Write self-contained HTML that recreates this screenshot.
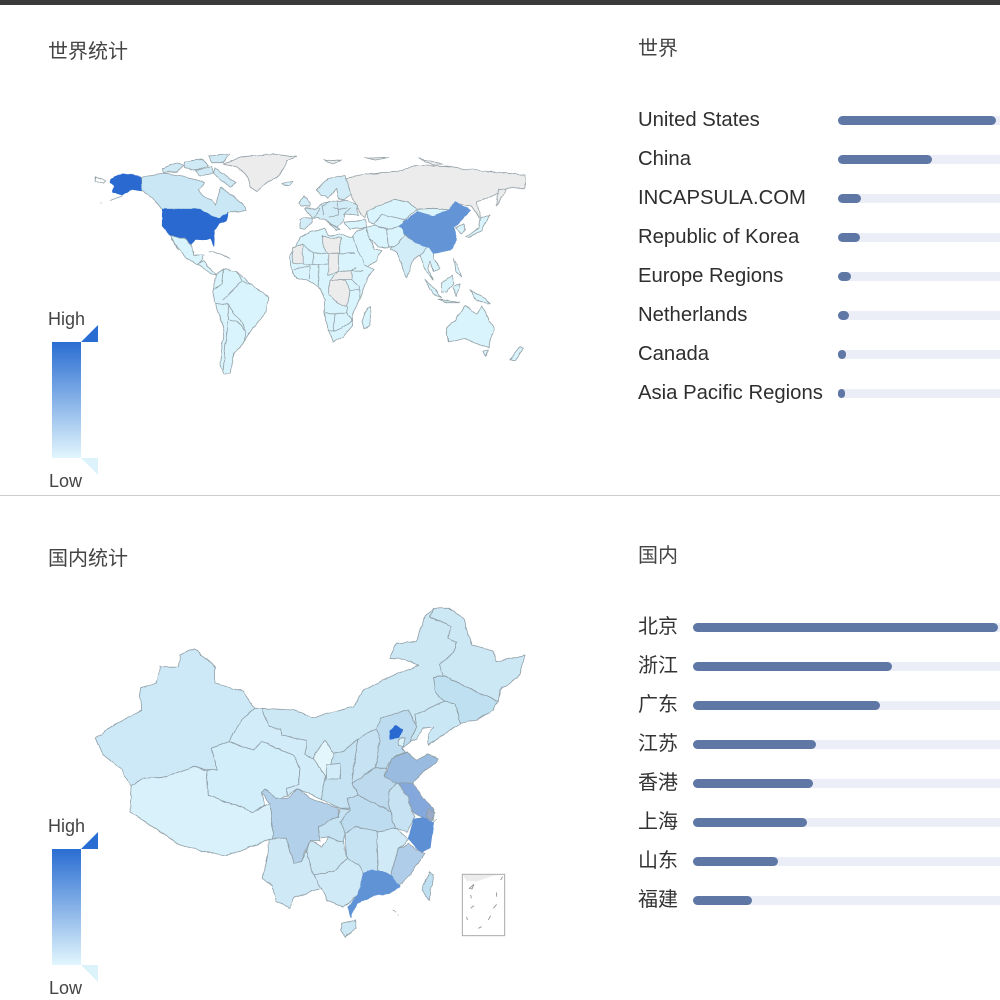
<!DOCTYPE html>
<html><head><meta charset="utf-8"><style>
html,body{margin:0;padding:0;background:#fff}
#p{position:relative;width:1000px;height:1000px;overflow:hidden;background:#fff;font-family:"Liberation Sans","Noto Sans CJK SC",sans-serif;color:#333;filter:blur(.3px)}
.t{position:absolute;white-space:nowrap;font-size:20px;line-height:24px}
.e{font-size:20.3px;color:#2e2e2e}
.tr{position:absolute;height:9px;background:#eceef7;border-radius:4.5px 0 0 4.5px;right:0}
.f{position:absolute;left:0;top:0;height:9px;background:#5f77a5;border-radius:4.5px}
.w{left:838px}.c{left:693px}
.leg{position:absolute;left:52px;width:29px;height:116px;background:linear-gradient(#2a6dd2,#e2f6fd)}
.s{position:absolute;font-size:18px;line-height:20px;color:#444}
svg{position:absolute;left:0;top:0}
</style></head><body><div id="p">
<div style="position:absolute;left:0;top:0;width:1000px;height:5px;background:#3a3a3a"></div>
<div style="position:absolute;left:0;top:495px;width:1000px;height:1px;background:#ccc"></div>

<div class="t" style="left:48px;top:40px;color:#444">世界统计</div>
<div class="t" style="left:638px;top:37px;color:#444">世界</div>
<div class="t" style="left:48px;top:547px;color:#444">国内统计</div>
<div class="t" style="left:638px;top:544px;color:#444">国内</div>

<div class="t e" style="left:638px;top:108px">United States</div>
<div class="t e" style="left:638px;top:147px">China</div>
<div class="t e" style="left:638px;top:186px">INCAPSULA.COM</div>
<div class="t e" style="left:638px;top:225px">Republic of Korea</div>
<div class="t e" style="left:638px;top:264px">Europe Regions</div>
<div class="t e" style="left:638px;top:303px">Netherlands</div>
<div class="t e" style="left:638px;top:342px">Canada</div>
<div class="t e" style="left:638px;top:381px">Asia Pacific Regions</div>

<div class="tr w" style="top:116px"><div class="f" style="width:158px"></div></div>
<div class="tr w" style="top:155px"><div class="f" style="width:94px"></div></div>
<div class="tr w" style="top:194px"><div class="f" style="width:23px"></div></div>
<div class="tr w" style="top:233px"><div class="f" style="width:22px"></div></div>
<div class="tr w" style="top:272px"><div class="f" style="width:13px"></div></div>
<div class="tr w" style="top:311px"><div class="f" style="width:11px"></div></div>
<div class="tr w" style="top:350px"><div class="f" style="width:8px"></div></div>
<div class="tr w" style="top:389px"><div class="f" style="width:7px"></div></div>

<div class="t" style="left:638px;top:615px">北京</div>
<div class="t" style="left:638px;top:654px">浙江</div>
<div class="t" style="left:638px;top:693px">广东</div>
<div class="t" style="left:638px;top:732px">江苏</div>
<div class="t" style="left:638px;top:771px">香港</div>
<div class="t" style="left:638px;top:810px">上海</div>
<div class="t" style="left:638px;top:849px">山东</div>
<div class="t" style="left:638px;top:888px">福建</div>

<div class="tr c" style="top:623px"><div class="f" style="width:305px"></div></div>
<div class="tr c" style="top:662px"><div class="f" style="width:199px"></div></div>
<div class="tr c" style="top:701px"><div class="f" style="width:187px"></div></div>
<div class="tr c" style="top:740px"><div class="f" style="width:123px"></div></div>
<div class="tr c" style="top:779px"><div class="f" style="width:120px"></div></div>
<div class="tr c" style="top:818px"><div class="f" style="width:114px"></div></div>
<div class="tr c" style="top:857px"><div class="f" style="width:85px"></div></div>
<div class="tr c" style="top:896px"><div class="f" style="width:59px"></div></div>

<div class="s" style="left:48px;top:309px">High</div>
<div class="s" style="left:49px;top:471px">Low</div>
<div class="leg" style="top:342px"></div>
<div class="s" style="left:48px;top:816px">High</div>
<div class="s" style="left:49px;top:978px">Low</div>
<div class="leg" style="top:849px"></div>

<svg width="1000" height="1000" viewBox="0 0 1000 1000">
<defs>
<filter id="wig" filterUnits="userSpaceOnUse" x="0" y="0" width="1000" height="1000">
<feTurbulence type="fractalNoise" baseFrequency="0.11" numOctaves="2" seed="4" result="n"/>
<feDisplacementMap in="SourceGraphic" in2="n" scale="3.2" xChannelSelector="R" yChannelSelector="G"/>
</filter>
</defs>
<polygon points="81,342 98,325 98,342" fill="#2a6dd2"/>
<polygon points="81,458 98,458 98,475" fill="#dcf3fb"/>
<polygon points="81,849 98,832 98,849" fill="#2a6dd2"/>
<polygon points="81,965 98,965 98,982" fill="#dcf3fb"/>

<!-- World map -->
<g filter="url(#wig)">
<g transform="translate(80,140) scale(.33333)" stroke="#93a0a6" stroke-width="2.4" stroke-linejoin="round" fill="#d9f4fc">
<path fill="#ececec" d="M430,72 L490,50 L580,42 L650,52 L622,62 L612,88 L590,110 L552,135 L530,155 L510,140 L500,105 L470,82Z"/>
<path d="M606,130 L640,124 L630,136 L612,137Z"/>
<path fill="#ececec" d="M730,62 L785,58 L760,72Z M855,55 L925,52 L890,60Z M1015,55 L1090,72 L1060,75Z"/>
<!-- Canadian arctic islands -->
<path fill="#cfe9f5" d="M245,85 L290,68 L310,75 L295,95 L250,98Z"/>
<path fill="#cfe9f5" d="M310,65 L370,58 L385,78 L340,92 L312,82Z"/>
<path fill="#cfe9f5" d="M385,48 L450,42 L430,68 L395,68Z"/>
<path fill="#cfe9f5" d="M345,92 L395,80 L400,100 L360,108Z"/>
<path fill="#cfe9f5" d="M405,85 L440,108 L468,128 L450,140 L420,118 L400,102Z"/>
<!-- Canada -->
<path fill="#c9e7f5" d="M185,110 L245,100 L300,108 L350,118 L375,130 L355,150 L375,172 L395,180 L408,195 L415,160 L425,140 L450,165 L490,190 L500,212 L465,215 L445,218 L418,238 L395,226 L360,208 L248,208 L235,190 L205,165 L185,152Z"/>
<!-- Alaska -->
<path fill="#2a6ad0" stroke="#2a6ad0" d="M92,118 L130,100 L183,110 L185,152 L155,148 L125,165 L96,155 L104,138 L90,128Z"/>
<path fill="#fff" d="M44,112 L78,122 L72,130 L44,124Z"/>
<path fill="none" d="M125,168 L90,182 M62,192 L66,190"/>
<!-- USA -->
<path fill="#2a6ad0" stroke="#2a6ad0" d="M247,208 L360,208 L395,226 L415,236 L445,218 L440,240 L418,252 L402,270 L404,300 L403,320 L392,298 L345,300 L332,314 L312,295 L272,287 L247,258Z"/>
<!-- Mexico / central America -->
<path d="M272,287 L312,295 L332,314 L340,345 L372,345 L365,362 L352,372 L320,355 L296,325 L285,310Z"/>
<path d="M352,372 L372,362 L390,385 L410,405 L395,402 L370,385Z"/>
<path fill="none" d="M385,335 L420,342 L450,355 M275,295 L295,330"/>
<!-- South America -->
<path d="M410,402 L430,387 L470,395 L512,432 L565,472 L558,515 L515,570 L490,610 L462,640 L452,700 L432,705 L420,670 L432,570 L402,482 L397,455Z"/>
<path fill="none" d="M430,387 L425,430 L400,450 M470,395 L485,425 L440,470 L430,480 M512,432 L490,425 M440,490 L480,540 L500,575 L490,610 M405,490 L445,495 L445,540 L470,545 M445,545 L435,620 L430,690 M470,545 L495,570"/>
<!-- Russia -->
<path fill="#ececec" d="M795,115 L875,100 L950,95 L1010,75 L1100,80 L1180,90 L1335,105 L1335,145 L1285,143 L1240,165 L1190,188 L1205,240 L1175,200 L1125,188 L1110,210 L1060,205 L1010,208 L985,188 L945,178 L900,195 L862,215 L855,235 L830,200 L805,150Z"/>
<path fill="#ececec" d="M1255,150 L1280,145 L1250,198Z"/>
<!-- Europe -->
<path fill="#d3edf8" d="M710,150 L745,115 L795,105 L802,135 L812,165 L795,178 L775,175 L770,145 L745,175 L735,165 L720,165Z"/>
<path fill="#d3edf8" d="M676,205 L712,205 L730,190 L790,180 L830,195 L835,225 L795,222 L790,240 L770,262 L740,240 L722,238 L715,232 L698,235Z"/>
<path fill="none" d="M750,185 L725,200 L730,225 M775,180 L775,225 L745,230 M800,205 L760,205 M700,232 L720,205 M790,225 L810,205"/>
<path fill="#d3edf8" d="M660,238 L695,232 L695,245 L675,268 L660,265Z"/>
<path fill="#d3edf8" d="M655,190 L672,165 L690,190 L688,200 L665,197Z"/>
<path fill="#d3edf8" d="M740,240 L780,270 L770,272Z"/>
<path d="M790,245 L855,240 L860,262 L810,268Z"/>
<!-- Middle East, Central Asia -->
<path d="M815,290 L835,272 L860,262 L870,295 L885,330 L905,330 L890,360 L850,392 L835,350Z"/>
<path d="M860,262 L885,255 L920,270 L925,320 L895,322 L870,295Z"/>
<path d="M862,215 L900,195 L945,178 L985,188 L1010,208 L975,240 L945,232 L905,225 L880,250 L865,245Z"/>
<path d="M880,250 L905,225 L945,232 L975,240 L960,258 L925,268 L885,255Z"/>
<path d="M920,270 L960,258 L975,285 L960,320 L925,320Z"/>
<path fill="#d3edf8" d="M955,310 L975,285 L1012,310 L1045,322 L1040,345 L1020,345 L1000,360 L982,412 L965,375 L950,340 L930,325Z"/>
<path d="M1010,208 L1060,205 L1110,210 L1100,225 L1060,228 L1010,215Z"/>
<!-- Africa -->
<path d="M630,345 L650,315 L662,290 L700,272 L735,268 L745,285 L782,285 L820,290 L835,335 L855,375 L880,388 L860,420 L838,478 L815,530 L818,555 L790,590 L760,606 L745,570 L733,520 L736,480 L716,442 L682,420 L650,415 L632,385Z"/>
<path fill="#ececec" d="M728,290 L782,295 L782,340 L745,340 L728,320Z"/>
<path fill="#ececec" d="M636,325 L668,312 L668,372 L640,368Z"/>
<path fill="#ececec" d="M745,340 L775,340 L775,395 L745,405Z"/>
<path fill="#ececec" d="M750,420 L795,420 L810,450 L800,500 L775,490 L745,465Z"/>
<path fill="#ececec" d="M775,395 L815,392 L815,420 L795,420 L750,420Z"/>
<path fill="none" d="M782,295 L782,340 L775,340 M782,340 L825,340 M668,312 L700,340 L745,340 M700,340 L700,375 L668,372 M700,375 L745,372 M640,390 L690,378 L690,415 M715,375 L715,442 M815,392 L850,392 M815,420 L838,440 L838,478 M810,450 L838,450 M735,520 L800,520 L805,500 M765,520 L760,575 L745,570 M800,520 L815,540 L785,565 L760,575 M830,380 L815,392"/>
<path d="M860,505 L872,500 L868,555 L852,565 L846,545Z"/>
<!-- Australia, NZ -->
<path d="M1098,565 L1130,535 L1155,498 L1190,525 L1205,498 L1242,565 L1225,625 L1190,610 L1155,595 L1105,607Z"/>
<path d="M1210,635 L1225,632 L1218,650Z"/>
<path d="M1290,660 L1320,620 L1330,625 L1305,660Z"/>
<!-- SE Asia, islands -->
<path d="M1020,345 L1042,322 L1062,340 L1062,355 L1080,385 L1060,395 L1050,365 L1045,385 L1058,420 L1040,395Z"/>
<path d="M1035,420 L1060,440 L1085,475 L1060,460Z"/>
<path d="M1085,430 L1115,405 L1120,430 L1100,458 L1085,455Z"/>
<path d="M1075,478 L1140,488 L1100,488Z"/>
<path d="M1118,440 L1140,430 L1130,468Z"/>
<path d="M1170,450 L1210,470 L1230,490 L1190,482Z"/>
<path d="M1122,355 L1135,380 L1145,412 L1128,395Z"/>
<path d="M1158,290 L1195,265 L1200,235 L1230,225 L1205,270 L1165,293Z"/>
<path d="M1125,262 L1150,250 L1155,270 L1145,280Z"/>
<!-- China -->
<path fill="#6494d6" stroke="#6494d6" d="M958,258 L1010,215 L1060,228 L1110,210 L1125,185 L1170,210 L1145,240 L1120,262 L1132,300 L1110,330 L1062,340 L1042,322 L1012,310 L975,282Z"/>
</g>
</g>

<!-- China map -->
<g filter="url(#wig)">
<g transform="translate(80,595) scale(.33333)" stroke="#8f9ea6" stroke-width="2.4" stroke-linejoin="round" fill="#cde8f5">
<path fill="#cde9f7" d="M47,430 L100,390 L185,345 L180,280 L230,265 L240,215 L295,215 L300,180 L340,160 L405,215 L405,265 L490,290 L525,340 L490,370 L445,440 L395,460 L412,525 L340,517 L260,545 L190,550 L155,572 L120,520 L70,480Z"/>
<path fill="#d8f1fb" d="M155,572 L190,550 L260,545 L340,517 L380,525 L385,600 L520,650 L570,625 L580,730 L540,745 L440,782 L370,770 L300,750 L210,690 L150,650Z"/>
<path fill="#d2eefa" d="M395,460 L445,440 L520,465 L545,440 L640,480 L660,520 L655,570 L620,580 L625,600 L600,610 L585,610 L555,582 L545,592 L555,630 L520,650 L385,600 L380,525 L412,525Z"/>
<path fill="#d2edf9" d="M525,340 L545,340 L565,395 L600,400 L605,420 L680,435 L675,480 L705,490 L738,545 L722,612 L655,582 L620,600 L620,580 L655,570 L660,520 L640,480 L545,440 L520,465 L445,440 L490,370Z"/>
<path fill="#cde8f5" d="M545,340 L640,345 L700,368 L820,335 L850,285 L930,245 L1015,210 L975,195 L928,190 L950,145 L1010,140 L1030,70 L1060,40 L1050,65 L1115,95 L1105,130 L1130,145 L1115,180 L1075,210 L1090,240 L1060,250 L1065,290 L1095,320 L1005,360 L1010,395 L985,345 L900,370 L890,400 L835,430 L790,470 L760,475 L735,435 L700,490 L675,480 L680,435 L605,420 L600,400 L565,395Z"/>
<path fill="#cde8f5" d="M1060,40 L1110,40 L1150,70 L1175,150 L1240,170 L1250,200 L1335,180 L1320,240 L1260,285 L1255,320 L1200,295 L1130,262 L1090,240 L1075,210 L1115,180 L1130,145 L1105,130 L1115,95 L1050,65Z"/>
<path fill="#bfe0f1" d="M1060,250 L1090,240 L1130,262 L1200,295 L1255,320 L1240,345 L1190,375 L1140,385 L1125,325 L1095,320 L1065,290Z"/>
<path fill="#cae7f5" d="M1005,360 L1095,320 L1125,325 L1140,385 L1090,420 L1045,450 L1045,420 L1062,395 L1030,400 L1010,430 L990,440 L1010,395Z"/>
<path fill="#bedcf0" d="M900,370 L985,345 L1010,395 L990,440 L965,460 L975,470 L935,490 L920,520 L885,520 L900,440 L890,400Z"/>
<path fill="#dcf3fb" d="M960,430 L975,428 L968,456 L955,450Z"/>
<path fill="#c7e3f3" d="M835,430 L890,400 L900,440 L885,520 L815,565 L825,490Z"/>
<path fill="#c6e3f3" d="M760,475 L790,470 L835,430 L825,490 L815,565 L835,600 L800,610 L810,640 L780,640 L722,612 L738,545Z"/>
<path fill="#e2f6fc" d="M700,490 L735,435 L760,475 L755,505 L738,545Z"/>
<path fill="#d2edf9" d="M738,510 L780,505 L782,552 L740,552Z"/>
<path fill="#bcd9ee" d="M815,565 L885,520 L920,520 L915,545 L950,565 L925,590 L930,650 L880,625 L835,600Z"/>
<path fill="#9abbe0" d="M915,545 L935,490 L980,470 L1010,495 L1040,477 L1075,490 L1070,502 L1020,540 L1000,565 L950,565Z"/>
<path fill="#84a8dc" d="M950,565 L1000,565 L1030,610 L1060,640 L1060,675 L1030,670 L995,650 L985,605Z"/>
<path fill="#9aa9c6" d="M1045,640 L1062,652 L1055,676 L1040,668Z"/>
<path fill="#c6e2f3" d="M925,590 L950,565 L985,605 L995,650 L1005,665 L980,712 L945,700 L930,650Z"/>
<path fill="#5c8fd4" stroke="#5c8fd4" d="M1002,672 L1030,668 L1062,682 L1052,760 L1022,772 L985,730Z"/>
<path fill="#bedcf0" d="M780,640 L810,640 L800,610 L835,600 L880,625 L930,650 L945,700 L890,710 L825,695 L795,715 L780,682Z"/>
<path fill="#c6e3f3" d="M715,695 L775,665 L780,640 L810,645 L780,680 L795,715 L790,742 L745,725 L720,730Z"/>
<path fill="#b2d0e9" d="M545,592 L555,582 L585,610 L620,610 L655,582 L690,610 L775,640 L775,665 L715,695 L720,740 L690,735 L665,800 L640,805 L620,730 L580,730 L570,625Z"/>
<path fill="#cde8f5" d="M680,770 L690,735 L725,755 L745,725 L790,742 L800,790 L760,830 L700,840Z"/>
<path fill="#c6e3f3" d="M795,715 L825,695 L890,710 L895,825 L850,835 L800,795Z"/>
<path fill="#d0ebf7" d="M890,710 L945,700 L985,735 L955,760 L932,840 L895,825Z"/>
<path fill="#afcde8" d="M955,760 L985,745 L1022,772 L1035,775 L990,840 L955,875 L932,840Z"/>
<path fill="#d0ebf7" d="M700,840 L760,830 L800,790 L835,810 L850,835 L835,900 L790,935 L740,915 L725,880Z"/>
<path fill="#5f93d6" stroke="#5f93d6" d="M850,835 L875,825 L895,825 L932,840 L960,875 L930,895 L890,900 L830,925 L812,968 L802,935 L835,900Z"/>
<path fill="#cfe9f6" d="M570,735 L580,730 L620,730 L640,805 L665,800 L680,770 L700,840 L725,880 L690,890 L640,910 L630,940 L590,920 L575,870 L548,850Z"/>
<path fill="#cde8f5" d="M785,985 L825,975 L830,1000 L795,1026 L782,1005Z"/>
<path fill="#bfe0f1" d="M1050,830 L1060,838 L1048,918 L1025,885Z"/>
<path fill="#2a6ad0" stroke="#2a6ad0" d="M928,410 L945,392 L965,402 L958,426 L930,430Z"/>
<path fill="none" stroke="#888" stroke-width="2" d="M1060,680 L1072,675 M935,945 L945,950 M952,955 L955,960"/>
</g>
</g>
<!-- inset -->
<g transform="translate(80,595) scale(.33333)">
<rect x="1147" y="838" width="127" height="184" fill="#fff" stroke="#aaa" stroke-width="3"/>
<path fill="#ececec" d="M1148,840 L1272,840 L1240,842 L1190,860 L1160,858Z"/>
<path fill="none" stroke="#8a8a8a" stroke-width="2.4" d="M1168,880 L1182,868 L1176,882Z M1250,892 L1250,905 M1262,855 L1268,845 M1172,900 L1174,910 M1172,940 L1182,932 M1160,965 L1162,975 M1195,1000 L1205,995 M1225,975 L1232,962 M1240,940 L1250,928"/>
</g>
</svg>
</div></body></html>
